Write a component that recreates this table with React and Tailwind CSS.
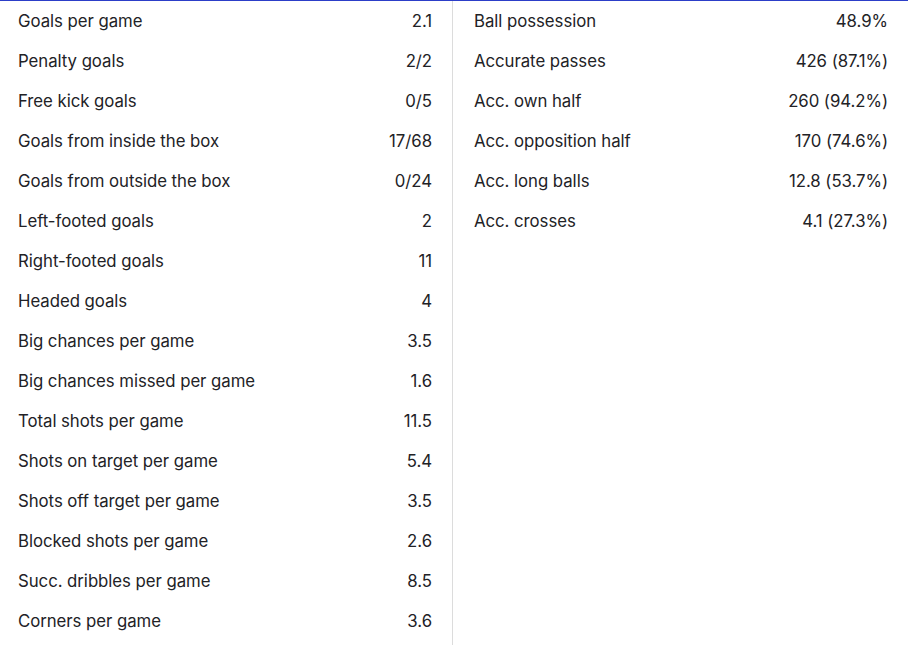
const attacking = [
  ['Goals per game', '2.1'],
  ['Penalty goals', '2/2'],
  ['Free kick goals', '0/5'],
  ['Goals from inside the box', '17/68'],
  ['Goals from outside the box', '0/24'],
  ['Left-footed goals', '2'],
  ['Right-footed goals', '11'],
  ['Headed goals', '4'],
  ['Big chances per game', '3.5'],
  ['Big chances missed per game', '1.6'],
  ['Total shots per game', '11.5'],
  ['Shots on target per game', '5.4'],
  ['Shots off target per game', '3.5'],
  ['Blocked shots per game', '2.6'],
  ['Succ. dribbles per game', '8.5'],
  ['Corners per game', '3.6'],
];

const passing = [
  ['Ball possession', '48.9%'],
  ['Accurate passes', '426 (87.1%)'],
  ['Acc. own half', '260 (94.2%)'],
  ['Acc. opposition half', '170 (74.6%)'],
  ['Acc. long balls', '12.8 (53.7%)'],
  ['Acc. crosses', '4.1 (27.3%)'],
];

function Row({ label, value }) {
  return (
    <div className="flex h-10 items-center justify-between">
      <span>{label}</span>
      <span>{value}</span>
    </div>
  );
}

export default function App() {
  return (
    <div
      className="h-[645px] w-[908px] overflow-hidden bg-white text-[16.8px] tracking-[-0.05px] text-[#222226]"
      style={{ fontFamily: 'Inter, sans-serif' }}
    >
      <div className="h-px bg-[#2c3ec8]" />
      <div className="flex h-[644px]">
        <div className="w-[452px] pl-[18px] pr-[20px] pt-px">
          {attacking.map(([l, v]) => (
            <Row key={l} label={l} value={v} />
          ))}
        </div>
        <div className="w-px bg-[#dcdcdc]" />
        <div className="flex-1 pl-[21px] pr-[20px] pt-px">
          {passing.map(([l, v]) => (
            <Row key={l} label={l} value={v} />
          ))}
        </div>
      </div>
    </div>
  );
}
